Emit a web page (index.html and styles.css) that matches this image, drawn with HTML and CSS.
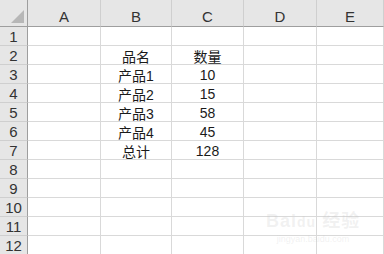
FILE: index.html
```html
<!DOCTYPE html>
<html>
<head>
<meta charset="utf-8">
<link rel="stylesheet" href="styles.css">
</head>
<body>
<div class="sheet">
  <div class="corner"><span class="tri"></span></div>
  <div class="ch">A</div><div class="ch">B</div><div class="ch">C</div><div class="ch">D</div><div class="ch">E</div>

  <div class="rh">1</div><div class="c"></div><div class="c"></div><div class="c"></div><div class="c"></div><div class="c"></div>
  <div class="rh">2</div><div class="c"></div><div class="c">品名</div><div class="c">数量</div><div class="c"></div><div class="c"></div>
  <div class="rh">3</div><div class="c"></div><div class="c">产品1</div><div class="c">10</div><div class="c"></div><div class="c"></div>
  <div class="rh">4</div><div class="c"></div><div class="c">产品2</div><div class="c">15</div><div class="c"></div><div class="c"></div>
  <div class="rh">5</div><div class="c"></div><div class="c">产品3</div><div class="c">58</div><div class="c"></div><div class="c"></div>
  <div class="rh">6</div><div class="c"></div><div class="c">产品4</div><div class="c">45</div><div class="c"></div><div class="c"></div>
  <div class="rh">7</div><div class="c"></div><div class="c">总计</div><div class="c">128</div><div class="c"></div><div class="c"></div>
  <div class="rh">8</div><div class="c"></div><div class="c"></div><div class="c"></div><div class="c"></div><div class="c"></div>
  <div class="rh">9</div><div class="c"></div><div class="c"></div><div class="c"></div><div class="c"></div><div class="c"></div>
  <div class="rh">10</div><div class="c"></div><div class="c"></div><div class="c"></div><div class="c"></div><div class="c"></div>
  <div class="rh">11</div><div class="c"></div><div class="c"></div><div class="c"></div><div class="c"></div><div class="c"></div>
  <div class="rh">12</div><div class="c"></div><div class="c"></div><div class="c"></div><div class="c"></div><div class="c"></div>
</div>
<div class="wm"><span class="wm1">Bai<span class="du">du</span> 经验</span><span class="wm2">jingyan.baidu.com</span></div>
</body>
</html>
```

FILE: styles.css
```css
* { box-sizing: border-box; }
html, body { margin: 0; padding: 0; background: #fff; }
body { width: 384px; height: 254px; overflow: hidden; position: relative;
  font-family: "Liberation Sans", "Noto Sans CJK SC", sans-serif; color: #222; }
.sheet {
  display: grid;
  grid-template-columns: 28px 73px 71px 72px 73px 1fr;
  grid-template-rows: 27px repeat(12, 19px);
}
.corner { background: #e6e6e6; border-right: 1px solid #9e9e9e; border-bottom: 1px solid #9e9e9e; position: relative; }
.tri { position: absolute; right: 3px; bottom: 3px; width: 0; height: 0;
  border-left: 13px solid transparent; border-bottom: 13px solid #b7b7b7; }
.ch { background: #e6e6e6; border-right: 1px solid #cfcfcf; border-bottom: 1px solid #9e9e9e;
  display: flex; align-items: flex-end; justify-content: center; padding-bottom: 1px;
  font-size: 15px; color: #333; }
.rh { background: #e6e6e6; border-right: 1px solid #9e9e9e; border-bottom: 1px solid #cfcfcf;
  display: flex; align-items: center; justify-content: center; font-size: 15px; color: #333; padding-top: 1px; }
.c { border-right: 1px solid #d9d9d9; border-bottom: 1px solid #d9d9d9;
  display: flex; align-items: center; justify-content: center; font-size: 14px; color: #1a1a1a;
  font-family: "Liberation Sans", "Noto Sans CJK SC", sans-serif; padding-top: 1px; }
.wm { position: absolute; left: 266px; top: 206px; display: flex; flex-direction: column; align-items: center;
  color: rgba(200,200,200,0.25); pointer-events: none; }
.wm1 { font-size: 18px; font-weight: bold; letter-spacing: 1px; }
.du { font-size: 14px; }
.wm2 { font-size: 9px; margin-top: 2px; }
```
